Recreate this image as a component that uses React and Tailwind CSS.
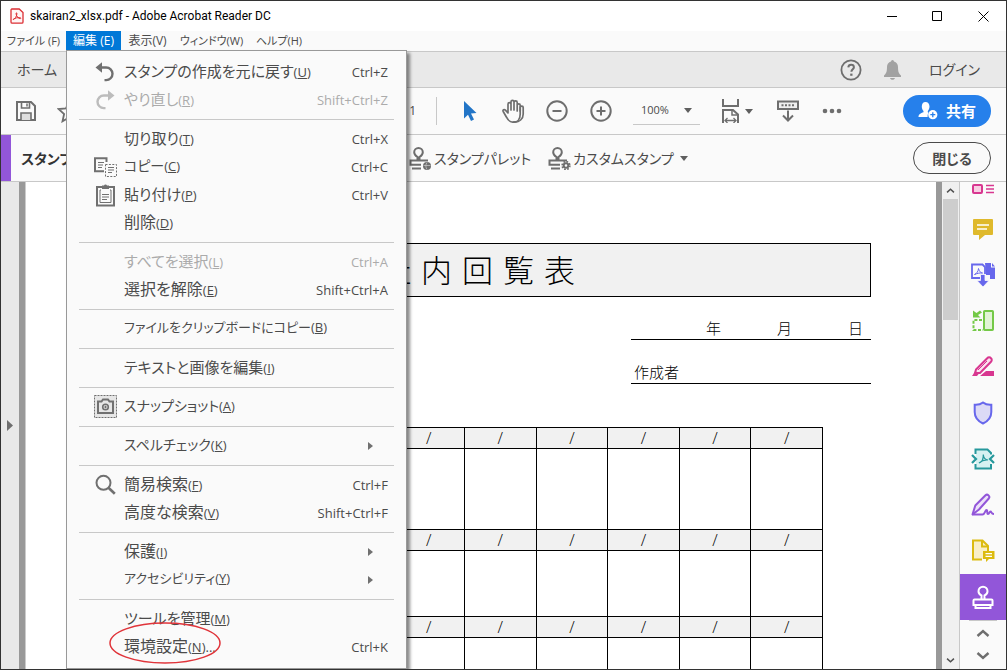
const EDIT_MENU = [
  [
    { label: "スタンプの作成を元に戻す", mnemonic: "U", shortcut: "Ctrl+Z", icon: UndoIcon, size: "text-[15px]" },
    { label: "やり直し", mnemonic: "R", shortcut: "Shift+Ctrl+Z", icon: RedoIcon, disabled: true, size: "text-[15px]" },
  ],
  [
    { label: "切り取り", mnemonic: "T", shortcut: "Ctrl+X", size: "text-[15px]" },
    { label: "コピー", mnemonic: "C", shortcut: "Ctrl+C", icon: CopyIcon, size: "text-[14px]" },
    { label: "貼り付け", mnemonic: "P", shortcut: "Ctrl+V", icon: PasteIcon, size: "text-[15px]" },
    { label: "削除", mnemonic: "D", size: "text-[16px]" },
  ],
  [
    { label: "すべてを選択", mnemonic: "L", shortcut: "Ctrl+A", disabled: true, size: "text-[15px]" },
    { label: "選択を解除", mnemonic: "E", shortcut: "Shift+Ctrl+A", size: "text-[16px]" },
  ],
  [{ label: "ファイルをクリップボードにコピー", mnemonic: "B", size: "text-[13px]" }],
  [{ label: "テキストと画像を編集", mnemonic: "I", size: "text-[15px]" }],
  [{ label: "スナップショット", mnemonic: "A", icon: SnapshotIcon, size: "text-[14px]" }],
  [{ label: "スペルチェック", mnemonic: "K", submenu: true, size: "text-[14px]" }],
  [
    { label: "簡易検索", mnemonic: "F", shortcut: "Ctrl+F", icon: SearchIcon, size: "text-[16px]" },
    { label: "高度な検索", mnemonic: "V", shortcut: "Shift+Ctrl+F", size: "text-[16px]" },
  ],
  [
    { label: "保護", mnemonic: "I", submenu: true, size: "text-[16px]" },
    { label: "アクセシビリティ", mnemonic: "Y", submenu: true, size: "text-[13px]" },
  ],
  [
    { label: "ツールを管理", mnemonic: "M", size: "text-[15px]" },
    { label: "環境設定", mnemonic: "N", suffix: "...", shortcut: "Ctrl+K", circled: true, size: "text-[16px]" },
  ],
];

const COLUMNS = ["", "", "", "", "/", "/", "/", "/", "/", "/"];

function UndoIcon({ className }) {
  return (
    <svg viewBox="0 0 24 24" className={className || "size-6"} fill="none">
      <path d="M2.5 7.5 9 2.3v10.4z" fill="currentColor" />
      <path d="M8 7.5h5.2a6.3 6.3 0 0 1 0 12.6h-1.7" stroke="currentColor" strokeWidth="2.4" />
    </svg>
  );
}

function RedoIcon() {
  return <UndoIcon className="size-6 -scale-x-100" />;
}

function CopyIcon() {
  return (
    <svg viewBox="0 0 24 24" className="size-6" fill="none" stroke="currentColor">
      <path d="M11 16.2H2V3.2h11.5V7" strokeWidth="2" />
      <path d="M5 7.5h6M5 10h5M5 12.5h4" />
      <rect x="12.5" y="9.5" width="11" height="12" strokeDasharray="2 1.4" />
      <path d="M15 12.5h6M15 15h6M15 17.5h4" />
    </svg>
  );
}

function PasteIcon() {
  return (
    <svg viewBox="0 0 24 24" className="size-6" fill="none" stroke="currentColor">
      <rect x="4" y="4" width="17" height="18.5" strokeWidth="2" />
      <path d="M9 2.5h2a1.6 1.6 0 0 1 3 0h2V6H9z" fill="currentColor" stroke="none" />
      <path d="M8 7H7v12.5h11V7h-1" />
      <path d="M9 11.5h7M9 14h7M9 16.5h5" />
    </svg>
  );
}

function SnapshotIcon() {
  return (
    <svg viewBox="0 0 24 24" className="size-6" fill="none" stroke="currentColor">
      <rect x="1.5" y=".5" width="22" height="22" fill="#e6e6e6" strokeDasharray="2 1" />
      <path d="M5 6.500h3.500l1.500-2h5l1.500 2H20V18H5z" strokeWidth="2" />
      <circle cx="12.500" cy="12" r="2.800" strokeWidth="1.600" />
      <path d="M12.500 10.700v2.600M11.200 12h2.600" />
    </svg>
  );
}

function SearchIcon() {
  return (
    <svg viewBox="0 0 24 24" className="size-6" fill="none" stroke="currentColor">
      <circle cx="10.5" cy="9.8" r="7" strokeWidth="2" />
      <path d="m15.5 14.8 6.3 6" strokeWidth="2.6" />
    </svg>
  );
}

function StampIcon({ children }) {
  return (
    <svg viewBox="0 0 24 24" className="size-6 shrink-0" fill="none" stroke="#6e6e6e" strokeWidth="2">
      <path d="M9.500 14.500v-3.500C7.400 9.700 6.200 8.400 6.200 6.200a4.300 4.300 0 0 1 8.600 0c0 2.200-1.200 3.500-3.300 4.800v3.500" />
      <path d="M20 14.500H2.500v4.300H13" />
      <path d="M4 22.500h9" />
      {children}
    </svg>
  );
}

function Caret() {
  return (
    <svg viewBox="0 0 8 5" className="h-[5px] w-2 shrink-0" fill="#5f5f5f">
      <path d="M0 0h8L4 5z" />
    </svg>
  );
}

function Chevron({ className, stroke }) {
  return (
    <svg viewBox="0 0 14 8" className={className} fill="none" stroke={stroke || "#6e6e6e"} strokeWidth="2.400">
      <path d="m1.500 7 5.500-5 5.500 5" />
    </svg>
  );
}

function TitleBar() {
  return (
    <header className="flex h-[30px] shrink-0 items-center bg-white pl-[9px] text-black">
      <svg viewBox="0 0 14 16" className="h-4 w-[14px]" fill="none" stroke="#dc2f34">
        <path d="M1.600 1h7.600L13 4.600v9.400a1.200 1.200 0 0 1-1.200 1.200H2.200A1.200 1.200 0 0 1 1 14V2a1 1 0 0 1 .6-1z" strokeWidth="1.300" fill="#fff5f5" />
        <path d="M3.300 11.600c1.600-.5 3.200-3 3.600-5.600.2-1.700-1-1.700-.8 0 .4 2.300 2 4.300 4 4.600 1.200.1 1-1.100-.6-1.100-2 0-4 .5-5.600 1.300-.9.500-1 .9-.6.800z" />
      </svg>
      <h1 className="ml-[6px] flex-1 font-['Roboto',sans-serif] text-[12px]">skairan2_xlsx.pdf - Adobe Acrobat Reader DC</h1>
      <button aria-label="最小化" className="flex h-full w-[46px] items-center justify-center">
        <svg viewBox="0 0 11 11" className="size-[11px]" stroke="#000"><path d="M1 5.500h10" /></svg>
      </button>
      <button aria-label="最大化" className="flex h-full w-[46px] items-center justify-center">
        <svg viewBox="0 0 11 11" className="size-[11px]" stroke="#000" fill="none"><path d="M.5.500h9v9h-9z" /></svg>
      </button>
      <button aria-label="ウィンドウを閉じる" className="flex h-full w-[46px] items-center justify-center">
        <svg viewBox="0 0 11 11" className="size-[11px]" stroke="#000"><path d="m.5.500 10 10M10.500.500l-10 10" /></svg>
      </button>
    </header>
  );
}

function MenuBar() {
  return (
    <nav className="flex h-5 shrink-0 items-center bg-[#fafafa] text-[11px] text-[#4b4b4b]">
      <button className="h-full w-[65px] text-center">ファイル (F)</button>
      <button className="h-[19px] w-[55px] self-start bg-[#0078d7] text-center text-[12px] text-white">編集 (E)</button>
      <button className="h-full w-[53px] text-center text-[12px]">表示(V)</button>
      <button className="h-full w-[75px] text-center">ウィンドウ(W)</button>
      <button className="h-full w-[60px] text-center">ヘルプ(H)</button>
    </nav>
  );
}

function TabBar() {
  return (
    <div className="flex h-9 shrink-0 items-center border-t border-[#c8c8c8] bg-[#e9e9e9] pr-[26px] pl-4 text-[14px] text-[#4b4b4b]">
      <button>ホーム</button>
      <div className="flex-1" />
      <button aria-label="ヘルプ">
        <svg viewBox="0 0 22 22" className="size-[22px]" fill="none" stroke="#6e6e6e">
          <circle cx="11" cy="11" r="9.600" strokeWidth="1.800" />
          <path d="M8.300 8.300c.2-1.800 1.300-2.500 2.800-2.500 1.600 0 2.800 1 2.800 2.400 0 2-2.500 2.200-2.500 4.600" strokeWidth="2" />
          <path d="M10.200 14.600h2.300v2.200h-2.300z" fill="#6e6e6e" stroke="none" />
        </svg>
      </button>
      <button aria-label="通知" className="ml-[22px]">
        <svg viewBox="0 0 17 20" className="h-5 w-[17px]" fill="#a2a2a2">
          <path d="M7 1.500a1.500 1.500 0 0 1 3 0c2.500.8 4 2.800 4 5.500 0 4.500.7 6.500 3 8.500v1.500H0v-1.500c2.300-2 3-4 3-8.500 0-2.700 1.500-4.700 4-5.500zM6 18h5c-.4 1.200-1.300 1.800-2.500 1.800S6.400 19.200 6 18z" />
        </svg>
      </button>
      <button className="ml-7">ログイン</button>
    </div>
  );
}

function Toolbar() {
  return (
    <div className="flex h-12 shrink-0 items-center border-y border-[#c8c8c8] bg-[#fafafa] pr-[15px] text-[12px] text-[#4b4b4b]">
      <div className="flex w-[415px] shrink-0 items-center pl-[14px]">
        <button aria-label="保存">
          <svg viewBox="0 0 22 22" className="size-[22px]" fill="none" stroke="#6e6e6e" strokeWidth="2">
            <path d="M2 2h14l4 4v14H2z" />
            <path d="M6.500 2v6h8V2" strokeWidth="1.600" />
            <path d="M12 3.500v3" strokeWidth="1.500" />
            <path d="M6 20v-7h10v7" strokeWidth="1.600" fill="#dedede" />
          </svg>
        </button>
        <button aria-label="スターを付ける" className="ml-5">
          <svg viewBox="0 0 24 24" className="size-6" fill="none" stroke="#6e6e6e" strokeWidth="1.800">
            <path d="m12 2.500 3 6.800 7.500.7-5.600 5 1.600 7.300L12 18.500l-6.500 3.800L7.100 15 1.500 10l7.500-.7z" />
          </svg>
        </button>
        <span className="ml-auto">1</span>
      </div>
      <div className="ml-5 h-7 w-px bg-[#c8c8c8]" />
      <button aria-label="選択ツール" className="ml-[26px]">
        <svg viewBox="0 0 14 22" className="h-[22px] w-[14px]" fill="#2275c7">
          <path d="M1 1v17.500l4-3.800 3 6.300 3-1.400-3-6.200 5.500-.4z" />
        </svg>
      </button>
      <button aria-label="手のひらツール" className="ml-6">
        <svg viewBox="0 0 24 24" className="size-6" fill="none" stroke="#6e6e6e" strokeWidth="1.700" strokeLinejoin="round" strokeLinecap="round">
          <path d="M7 14V5.200a1.500 1.500 0 0 1 3 0V11 2.800a1.500 1.500 0 0 1 3 0V11 3.400a1.500 1.500 0 0 1 3.200 0V12 6.200c.2-1.700 3-1.700 3 0V15c0 5-2.600 8.200-6.600 8.200-3.600 0-5.600-1.800-7.100-5L2.200 12.500c-.8-1.600 1-2.600 2.200-1.300z" />
          <path d="M19.200 12V8.200c.3-1.500 3-1.500 3 .3V15c0 5-3.600 8.200-9.600 8.200" />
        </svg>
      </button>
      <button aria-label="縮小" className="ml-[21px]">
        <svg viewBox="0 0 22 22" className="size-[22px]" fill="none" stroke="#6e6e6e" strokeWidth="2">
          <circle cx="11" cy="11" r="9.700" /><path d="M6.500 11h9" />
        </svg>
      </button>
      <button aria-label="拡大" className="ml-[22px]">
        <svg viewBox="0 0 22 22" className="size-[22px]" fill="none" stroke="#6e6e6e" strokeWidth="2">
          <circle cx="11" cy="11" r="9.700" /><path d="M6.500 11h9M11 6.500v9" />
        </svg>
      </button>
      <label className="relative ml-[21px] flex h-7 w-[67px] items-center border-b border-[#c8c8c8]">
        <select aria-label="ズーム" className="w-full appearance-none bg-transparent pl-2 text-[11px]" defaultValue="100%">
          <option>100%</option>
        </select>
        <span className="pointer-events-none absolute right-2"><Caret /></span>
      </label>
      <button aria-label="ページ幅に合わせる" className="ml-5 flex items-center gap-[3px]">
        <svg viewBox="0 0 22 24" className="h-6 w-[22px]" fill="none" stroke="#6e6e6e" strokeWidth="2">
          <path d="M3 0v7h15V0M3 24V11h10l5 4.500V24" />
          <path d="M12 11v5h6" strokeWidth="1.500" />
          <path d="M5 21.500h11M7.500 19 5 21.500 7.500 24M13.500 19l2.500 2.500-2.500 2.500" strokeWidth="1.300" />
        </svg>
        <Caret />
      </button>
      <button aria-label="スクロール" className="ml-6">
        <svg viewBox="0 0 22 22" className="size-[22px]" fill="none" stroke="#6e6e6e" strokeWidth="2">
          <path d="M1 1.500h20V9H1z" fill="#eee" />
          <path d="M4.500 5.200h13" strokeDasharray="2 1.500" />
          <path d="M11 10.500v10M6 15.500l5 5 5-5" />
        </svg>
      </button>
      <button aria-label="その他のツール" className="ml-[23px]">
        <svg viewBox="0 0 20 6" className="h-[6px] w-5" fill="#6e6e6e">
          <circle cx="3" cy="3" r="2.300" /><circle cx="10" cy="3" r="2.300" /><circle cx="17" cy="3" r="2.300" />
        </svg>
      </button>
      <button className="ml-auto flex h-8 w-[88px] items-center gap-2 rounded-full bg-[#2680eb] pl-[15px] text-[15px] font-bold text-white">
        <svg viewBox="0 0 20 18" className="h-[18px] w-5" fill="#fff">
          <path d="M7.500 0C10 0 11.500 2 11.500 4.500c0 2-1 3.500-1.700 4.500v1.200l.8.600a5.500 5.500 0 0 0-1 4.200H.5c0-3 2.200-3.800 5-4.800V9c-.8-1-1.700-2.500-1.700-4.500C3.800 2 5 0 7.500 0z" />
          <circle cx="14.800" cy="12.700" r="4.600" />
          <path d="M14.800 10.200v5M12.300 12.700h5" stroke="#2680eb" strokeWidth="1.300" />
        </svg>
        共有
      </button>
    </div>
  );
}

function StampBar() {
  return (
    <div className="flex h-[47px] shrink-0 items-center border-b border-[#c8c8c8] bg-[#fafafa] pr-[15px] text-[14px] text-[#4b4b4b]">
      <div className="flex h-full w-[407px] shrink-0 items-center border-l-[10px] border-[#9256d9] pl-[10px] font-bold text-[#333]">
        スタンプ
      </div>
      <button className="flex items-center gap-[2px]">
        <StampIcon>
          <circle cx="19" cy="20" r="4" fill="#6e6e6e" stroke="none" />
          <path d="M15.500 19.500h7M19 16.500c-1.500 2-1.500 5 0 7" stroke="#ccc" strokeWidth=".7" />
        </StampIcon>
        スタンプパレット
      </button>
      <button className="ml-4 flex items-center gap-[2px]">
        <StampIcon>
          <circle cx="19" cy="19.500" r="2.300" />
          <circle cx="19" cy="19.500" r="3.900" strokeWidth="1.600" strokeDasharray="1.700 1.360" />
        </StampIcon>
        カスタムスタンプ
        <span className="ml-1"><Caret /></span>
      </button>
      <button className="ml-auto h-8 w-[78px] rounded-full border border-[#4b4b4b] font-bold">閉じる</button>
    </div>
  );
}

function DateRow({ height }) {
  return (
    <>
      <tr className="h-[21px] bg-[#f1f1f1]">
        {COLUMNS.map((slot, i) => (
          <td key={i} className="border border-black p-0 text-center text-[16px] leading-[20px]">{slot}</td>
        ))}
      </tr>
      <tr className={height}>
        {COLUMNS.map((_, i) => (
          <td key={i} className="border border-black p-0" />
        ))}
      </tr>
    </>
  );
}

function Page() {
  return (
    <article className="min-w-0 flex-1 overflow-hidden bg-white pt-[61px] pr-[65px] pl-[58px] font-light text-black">
      <h2 className="flex h-[54px] items-center justify-center gap-[10px] border border-black bg-[#f1f1f1] text-[31px]">
        {["社", "内", "回", "覧", "表"].map((c) => (
          <span key={c}>{c}</span>
        ))}
      </h2>
      <div className="ml-auto w-[240px] text-[15px] leading-[22px]">
        <div className="mt-5 flex h-[23px] justify-end gap-14 border-b border-black pr-2">
          <span>年</span>
          <span>月</span>
          <span>日</span>
        </div>
        <div className="mt-[21px] h-[23px] border-b border-black pl-[3px]">作成者</div>
      </div>
      <div className="mt-[43px] mr-12 ml-[22px]">
        <table className="w-full table-fixed border-collapse">
          <tbody>
            <DateRow height="h-[81px]" />
            <DateRow height="h-[66px]" />
            <DateRow height="h-[81px]" />
          </tbody>
        </table>
      </div>
    </article>
  );
}

function ScrollBar() {
  return (
    <div className="flex w-[18px] shrink-0 flex-col items-center border-r border-[#c8c8c8] bg-[#f0f0f0]">
      <button aria-label="上へスクロール" className="flex h-[17px] items-center">
        <Chevron className="h-[5px] w-[9px]" stroke="#505050" />
      </button>
      <div className="h-[121px] w-[15px] bg-[#cdcdcd]" />
      <button aria-label="下へスクロール" className="mt-auto flex h-[17px] items-center">
        <Chevron className="h-[5px] w-[9px] rotate-180" stroke="#505050" />
      </button>
    </div>
  );
}

function ToolButton({ label, children }) {
  return (
    <button aria-label={label} className="flex h-[46px] shrink-0 items-center justify-center">
      <svg viewBox="0 0 24 24" className="size-6" fill="none">{children}</svg>
    </button>
  );
}

function ToolsPane() {
  return (
    <aside className="flex w-[46px] shrink-0 flex-col overflow-hidden bg-[#fafafa]">
      <button aria-label="ページを整理" className="flex h-6 shrink-0 justify-center pt-[2px]">
        <svg viewBox="0 0 24 10" className="h-[10px] w-6" fill="none" stroke="#d83790">
          <rect x="2" y="1" width="9" height="8" rx="1" strokeWidth="2" fill="#f7cfe3" />
          <path d="M15 1.500h8M15 5h8M15 8.500h8" strokeWidth="1.400" />
        </svg>
      </button>
      <ToolButton label="注釈">
        <path d="M3 2h18a1 1 0 0 1 1 1v14a1 1 0 0 1-1 1h-7l-6 5v-5H3a1 1 0 0 1-1-1V3a1 1 0 0 1 1-1z" fill="#dfb92c" />
        <path d="M6 8h12M6 12h10" stroke="#fff" strokeWidth="1.600" />
      </ToolButton>
      <ToolButton label="ファイルを結合">
        <path d="M14 0h6v4.500h4V16h-5v-4h-4z" fill="#6767ec" />
        <path d="M21 0v3.500h3z" fill="#6767ec" />
        <path d="M9 15H1V1.500h10.500L14 4v7" stroke="#6767ec" strokeWidth="1.800" />
        <path d="M3.500 11.500c2-.7 4-3.500 4-6 1.200 3.500 2 4 4 4.500-2.500-.2-5 .2-8 1.500z" stroke="#6767ec" />
        <path d="M9.500 11.500h4.500v6h4L12 24l-6-6.500h3.500z" fill="#6767ec" stroke="#fafafa" strokeWidth=".8" />
      </ToolButton>
      <ToolButton label="ページを整理する">
        <rect x="13" y="2" width="9" height="19" rx=".7" stroke="#74c947" strokeWidth="2" fill="#e1f4d5" />
        <path d="M11 11H2.500v10H12" stroke="#74c947" strokeWidth="2" strokeDasharray="3 1.600" />
        <path d="M2 1.500v7h7.500L7 6l4-2.500-2-2L5.500 4z" fill="#74c947" />
      </ToolButton>
      <ToolButton label="墨消し">
        <path d="M5 14.500 16.200 3.300a2.400 2.400 0 0 1 3.800 0 2.400 2.400 0 0 1 0 3.500L9 18H4z" stroke="#d83790" strokeWidth="2" fill="#fbe3ef" />
        <path d="m7 15 9-9" stroke="#d83790" />
        <path d="m1 21 3.500-5L8 18.500 6 21zM9 21l6-5h8v5z" fill="#d83790" />
      </ToolButton>
      <ToolButton label="保護">
        <path d="M12 1.500c2.500 2 5.500 2.500 8.300 2.300V11c0 6-4 9.500-8.300 11.500C7.700 20.500 3.700 17 3.700 11V3.800C6.500 4 9.500 3.500 12 1.500z" fill="#dcdaf6" stroke="#6767ec" strokeWidth="2" />
      </ToolButton>
      <ToolButton label="PDF を最適化">
        <path d="M5 3h11l3.500 3v15H5z" fill="#d6f1f1" />
        <path d="M4.500 7V2.500h12L20 6v1.500M4.500 17v4.500H20V17" stroke="#26989c" strokeWidth="2" />
        <path d="m1 8 4 4-4 4M23 8l-4 4 4 4" stroke="#26989c" strokeWidth="2.200" />
        <path d="M8 16c3-1 4.500-4 4.300-8.500C12.500 11 14 12.500 17 13c-3-.3-6 .5-9 3z" stroke="#26989c" strokeWidth="1.200" />
      </ToolButton>
      <ToolButton label="入力と署名">
        <path d="m1.500 21.500 2.800-9L14.500 2.300c2-1.800 5 1 3.300 3.200L8 16.500z" fill="#ece0f9" stroke="#9256d9" strokeWidth="2" strokeLinejoin="round" />
        <path d="M1.500 21.500h10c2.500 0 2.500-4.500 4-4.500s0 4 1.500 4 1.300-2.500 2.500-2.500.5 2.500 3.500 2.500" stroke="#9256d9" strokeWidth="2" />
      </ToolButton>
      <ToolButton label="注釈用に送信">
        <path d="M11 20.500H2V1.500h9.500L17 7v5" fill="#f9efc8" stroke="#dcbb10" strokeWidth="2" />
        <path d="M11 1.500V7.500h6" stroke="#dcbb10" strokeWidth="2" />
        <path d="M12 12h11.500v8H18l-3 3v-3h-3z" fill="#dcbb10" />
        <path d="M14.500 14.700h6.500M14.500 17.300h6.500" stroke="#fff" strokeWidth="1.200" />
      </ToolButton>
      <button aria-label="スタンプ" className="flex h-[46px] shrink-0 items-center justify-center bg-[#9256d9]">
        <svg viewBox="0 0 24 24" className="size-6" fill="none" stroke="#fff" strokeWidth="2">
          <path d="M10.500 14.500v-4C8.700 9.700 7.500 8.300 7.500 6.200a4.500 4.500 0 0 1 9 0c0 2.100-1.200 3.500-3 4.300v4" />
          <path d="M3.500 14.500h17a1 1 0 0 1 1 1V20h-19v-4.500a1 1 0 0 1 1-1zM4.500 20v3h15v-3" />
        </svg>
      </button>
      <div className="mx-[9px] h-px shrink-0 bg-[#c8c8c8]" />
      <button aria-label="上へ" className="mt-2 flex shrink-0 justify-center"><Chevron className="h-2 w-[14px]" /></button>
      <button aria-label="下へ" className="mt-[15px] flex shrink-0 justify-center"><Chevron className="h-2 w-[14px] rotate-180" /></button>
    </aside>
  );
}

function MenuItem({ item }) {
  const Icon = item.icon;
  return (
    <button
      role="menuitem"
      disabled={item.disabled}
      className={
        item.disabled
          ? "flex h-7 w-full items-center pr-[18px] pl-[26px] text-[#ababab]"
          : "flex h-7 w-full items-center pr-[18px] pl-[26px] text-[#4b4b4b]"
      }
    >
      <span className={item.disabled ? "mr-[7px] w-6 text-[#bcbcbc]" : "mr-[7px] w-6 text-[#707070]"}>
        {Icon && <Icon />}
      </span>
      <span className="relative flex items-baseline pb-[2px]">
        <span className={item.size}>{item.label}</span>
        <span className="text-[13px]">
          (<u>{item.mnemonic}</u>){item.suffix}
        </span>
        {item.circled && (
          <svg viewBox="0 0 112 42" className="pointer-events-none absolute -top-3 -left-[15px] h-[42px] w-28" fill="none">
            <ellipse cx="56" cy="21" rx="55" ry="20" stroke="#e0343a" strokeWidth="1.500" />
          </svg>
        )}
      </span>
      <span className="ml-auto pt-[2px] text-[13px]">{item.shortcut}</span>
      {item.submenu && (
        <svg viewBox="0 0 5 8" className="mr-[15px] h-2 w-[5px]" fill="#707070"><path d="M0 0v8l5-4z" /></svg>
      )}
    </button>
  );
}

function EditMenu() {
  return (
    <div role="menu" className="absolute top-[49px] left-[65px] w-[341px] border border-[#999] bg-[#fafafa] py-[7px] shadow-[3px_3px_3px_rgba(0,0,0,0.45)]">
      {EDIT_MENU.map((group, i) => (
        <div key={i}>
          {i > 0 && <hr className="mx-3 my-[5px] border-t border-[#c8c8c8]" />}
          {group.map((item) => (
            <MenuItem key={item.label} item={item} />
          ))}
        </div>
      ))}
    </div>
  );
}

export default function App() {
  return (
    <div className="relative flex h-screen w-full flex-col overflow-hidden border border-[#333] bg-[#fafafa] font-['Open_Sans','Noto_Sans_CJK_JP',sans-serif] [font-feature-settings:'palt']">
      <TitleBar />
      <MenuBar />
      <TabBar />
      <Toolbar />
      <StampBar />
      <main className="flex min-h-0 flex-1">
        <button aria-label="ナビゲーションパネルを開く" className="flex w-[18px] shrink-0 items-center bg-[#e9e9e9] pl-[6px]">
          <svg viewBox="0 0 6 11" className="h-[11px] w-[6px]" fill="#6e6e6e"><path d="M0 0v11l6-5.500z" /></svg>
        </button>
        <div className="flex min-w-0 flex-1 border-x-[6px] border-[#999]">
          <div className="w-px bg-[#ccc]" />
          <Page />
        </div>
        <ScrollBar />
        <ToolsPane />
      </main>
      <EditMenu />
    </div>
  );
}
